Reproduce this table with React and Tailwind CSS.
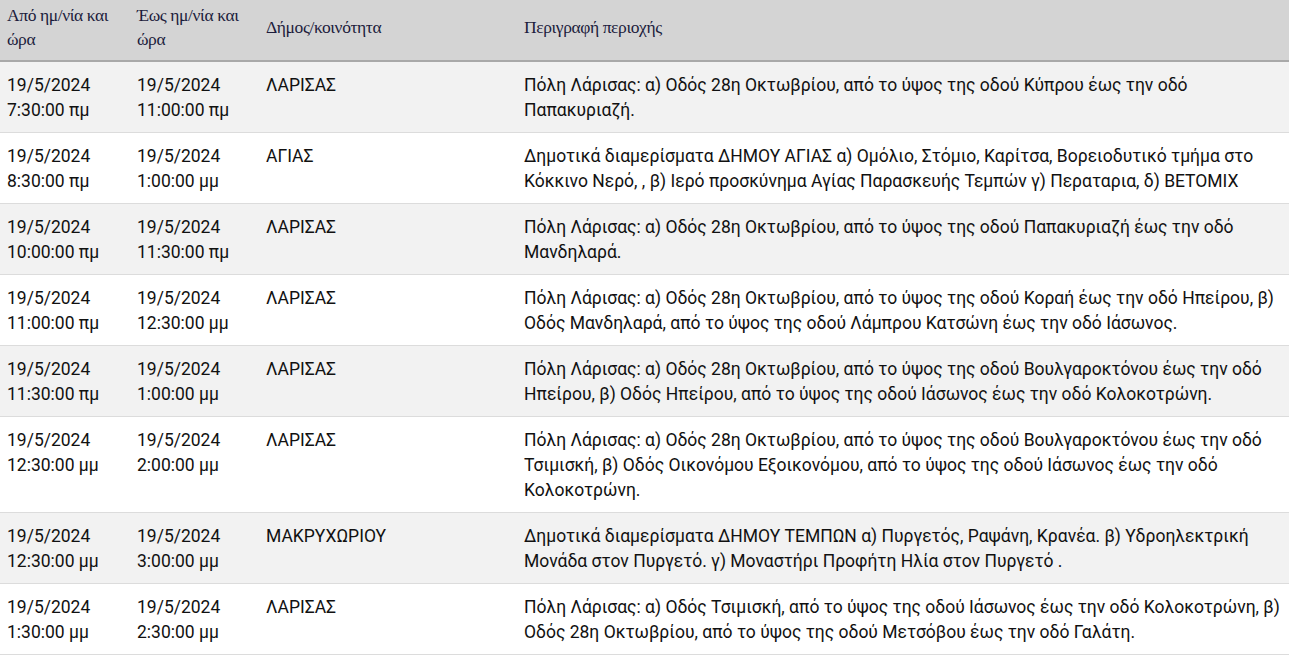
import React from 'react';

// Διακοπές ρεύματος - δεδομένα πίνακα
const rows = [
    { from: ['19/5/2024', '7:30:00 πμ'], to: ['19/5/2024', '11:00:00 πμ'], area: 'ΛΑΡΙΣΑΣ', desc: 'Πόλη Λάρισας: α) Οδός 28η Οκτωβρίου, από το ύψος της οδού Κύπρου έως την οδό Παπακυριαζή.' },
    { from: ['19/5/2024', '8:30:00 πμ'], to: ['19/5/2024', '1:00:00 μμ'], area: 'ΑΓΙΑΣ', desc: 'Δημοτικά διαμερίσματα ΔΗΜΟΥ ΑΓΙΑΣ α) Ομόλιο, Στόμιο, Καρίτσα, Βορειοδυτικό τμήμα στο Κόκκινο Νερό, , β) Ιερό προσκύνημα Αγίας Παρασκευής Τεμπών γ) Περαταρια, δ) ΒΕΤΟΜΙΧ' },
    { from: ['19/5/2024', '10:00:00 πμ'], to: ['19/5/2024', '11:30:00 πμ'], area: 'ΛΑΡΙΣΑΣ', desc: 'Πόλη Λάρισας: α) Οδός 28η Οκτωβρίου, από το ύψος της οδού Παπακυριαζή έως την οδό Μανδηλαρά.' },
    { from: ['19/5/2024', '11:00:00 πμ'], to: ['19/5/2024', '12:30:00 μμ'], area: 'ΛΑΡΙΣΑΣ', desc: 'Πόλη Λάρισας: α) Οδός 28η Οκτωβρίου, από το ύψος της οδού Κοραή έως την οδό Ηπείρου, β) Οδός Μανδηλαρά, από το ύψος της οδού Λάμπρου Κατσώνη έως την οδό Ιάσωνος.' },
    { from: ['19/5/2024', '11:30:00 πμ'], to: ['19/5/2024', '1:00:00 μμ'], area: 'ΛΑΡΙΣΑΣ', desc: 'Πόλη Λάρισας: α) Οδός 28η Οκτωβρίου, από το ύψος της οδού Βουλγαροκτόνου έως την οδό Ηπείρου, β) Οδός Ηπείρου, από το ύψος της οδού Ιάσωνος έως την οδό Κολοκοτρώνη.' },
    { from: ['19/5/2024', '12:30:00 μμ'], to: ['19/5/2024', '2:00:00 μμ'], area: 'ΛΑΡΙΣΑΣ', desc: 'Πόλη Λάρισας: α) Οδός 28η Οκτωβρίου, από το ύψος της οδού Βουλγαροκτόνου έως την οδό Τσιμισκή, β) Οδός Οικονόμου Εξοικονόμου, από το ύψος της οδού Ιάσωνος έως την οδό Κολοκοτρώνη.' },
    { from: ['19/5/2024', '12:30:00 μμ'], to: ['19/5/2024', '3:00:00 μμ'], area: 'ΜΑΚΡΥΧΩΡΙΟΥ', desc: 'Δημοτικά διαμερίσματα ΔΗΜΟΥ ΤΕΜΠΩΝ α) Πυργετός, Ραψάνη, Κρανέα. β) Υδροηλεκτρική Μονάδα στον Πυργετό. γ) Μοναστήρι Προφήτη Ηλία στον Πυργετό .' },
    { from: ['19/5/2024', '1:30:00 μμ'], to: ['19/5/2024', '2:30:00 μμ'], area: 'ΛΑΡΙΣΑΣ', desc: 'Πόλη Λάρισας: α) Οδός Τσιμισκή, από το ύψος της οδού Ιάσωνος έως την οδό Κολοκοτρώνη, β) Οδός 28η Οκτωβρίου, από το ύψος της οδού Μετσόβου έως την οδό Γαλάτη.' },
];

const headers = ['Από ημ/νία και ώρα', 'Έως ημ/νία και ώρα', 'Δήμος/κοινότητα', 'Περιγραφή περιοχής'];

const cell = "px-[7px] pt-[11px] pb-[9px] align-top text-[17.5px] leading-[25px] text-[#111] [font-family:Roboto,sans-serif]";

const App = () => {
    return (
        <div className="w-full bg-white">
            <table className="w-full table-fixed border-collapse">
                <colgroup>
                    <col className="w-[130px]" />
                    <col className="w-[129px]" />
                    <col className="w-[258px]" />
                    <col />
                </colgroup>
                <thead>
                    <tr className="bg-[#d4d4d4] border-b-2 border-[#a9a9a9]">
                        {headers.map((h) => (
                            <th
                                key={h}
                                className="h-[61px] px-[7px] pb-[7px] text-left align-middle font-normal text-[17.5px] leading-[24px] text-[#1c1c3c] [font-family:'Liberation_Serif',serif] tracking-[-0.4px]"
                            >
                                {h}
                            </th>
                        ))}
                    </tr>
                </thead>
                <tbody>
                    {rows.map((r, idx) => (
                        <tr key={idx} className={`border-b border-[#dcdcdc] ${idx % 2 === 0 ? 'bg-[#f2f2f2]' : 'bg-white'}`}>
                            {/* ημερομηνίες */}
                            <td className={cell}>
                                {r.from[0]}<br />{r.from[1]}
                            </td>
                            <td className={cell}>
                                {r.to[0]}<br />{r.to[1]}
                            </td>
                            <td className={cell}>{r.area}</td>
                            <td className={cell}>{r.desc}</td>
                        </tr>
                    ))}
                </tbody>
            </table>
        </div>
    );
};

export default App;
